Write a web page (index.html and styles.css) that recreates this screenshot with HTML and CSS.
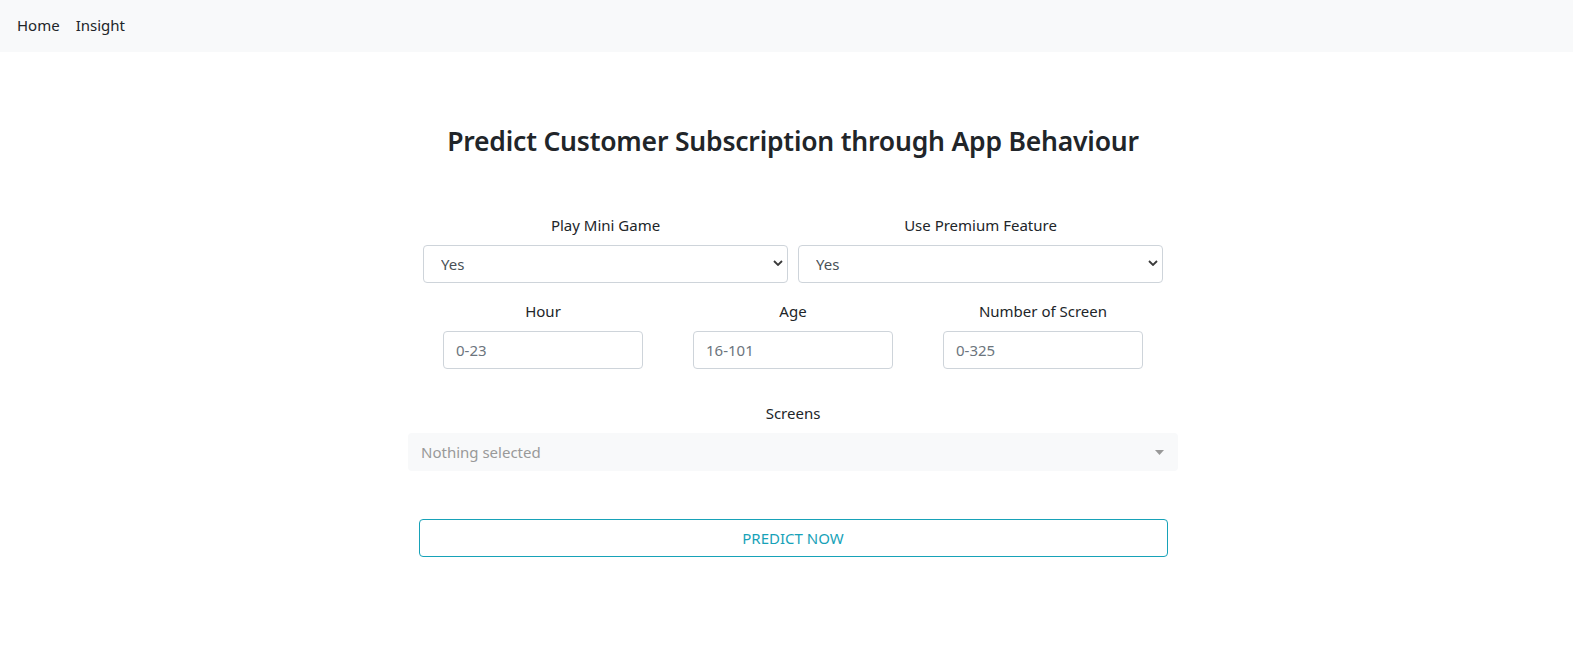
FILE: index.html
```html
<!DOCTYPE html>
<html lang="en">
<head>
<meta charset="utf-8">
<title>Predict Customer Subscription</title>
<link rel="stylesheet" href="styles.css">
</head>
<body>
<nav class="navbar">
  <a class="nav-link" href="#">Home</a>
  <a class="nav-link" href="#">Insight</a>
</nav>
<main class="main">
  <h3 class="title">Predict Customer Subscription through App Behaviour</h3>
  <form class="form">
    <div class="row-two">
      <div class="group">
        <label class="label">Play Mini Game</label>
        <div class="select-wrap">
          <select class="control select"><option>Yes</option><option>No</option></select>
          <svg class="chev" width="10" height="6" viewBox="0 0 10 6"><path d="M1 1 L5 5 L9 1" fill="none" stroke="#3a3a3a" stroke-width="1.8"/></svg>
        </div>
      </div>
      <div class="group">
        <label class="label">Use Premium Feature</label>
        <div class="select-wrap">
          <select class="control select"><option>Yes</option><option>No</option></select>
          <svg class="chev" width="10" height="6" viewBox="0 0 10 6"><path d="M1 1 L5 5 L9 1" fill="none" stroke="#3a3a3a" stroke-width="1.8"/></svg>
        </div>
      </div>
    </div>
    <div class="row-three">
      <div class="group small">
        <label class="label">Hour</label>
        <input class="control input" placeholder="0-23">
      </div>
      <div class="group small">
        <label class="label">Age</label>
        <input class="control input" placeholder="16-101">
      </div>
      <div class="group small">
        <label class="label">Number of Screen</label>
        <input class="control input" placeholder="0-325">
      </div>
    </div>
    <div class="group screens">
      <label class="label">Screens</label>
      <div class="picker">
        <span class="picker-text">Nothing selected</span>
        <svg class="caret" width="9" height="5" viewBox="0 0 9 5"><path d="M0 0 H9 L4.5 5 Z" fill="#999"/></svg>
      </div>
    </div>
    <button type="button" class="btn">PREDICT NOW</button>
  </form>
</main>
</body>
</html>
```
FILE: styles.css
```css
* { box-sizing: border-box; }
html, body { margin: 0; padding: 0; }
body {
  font-family: "Noto Sans", "Open Sans", sans-serif;
  font-size: 16px;
  line-height: 24px;
  color: #212529;
  background: #fff;
}
.navbar {
  height: 52px;
  background: #f8f9fa;
  display: flex;
  align-items: center;
  padding: 0 9px 2px;
}
.nav-link {
  color: #212529;
  text-decoration: none;
  font-size: 15px;
  padding: 0 8px;
}
.main {
  width: 770px;
  margin-left: calc(50% - 378.5px);
  padding-top: 72px;
}
.title {
  margin: 0 0 55px;
  text-align: center;
  font-size: 26.5px;
  line-height: 34px;
  font-weight: 600;
  letter-spacing: -0.2px;
}
.form { display: flex; flex-direction: column; }
.label {
  display: block;
  text-align: center;
  font-size: 15px;
  line-height: 24px;
  margin-bottom: 8px;
}
.row-two {
  display: flex;
  justify-content: center;
  gap: 10px;
  margin-bottom: 16px;
}
.row-two .group { width: 365px; }
.select-wrap { position: relative; }
.control {
  display: block;
  width: 100%;
  height: 38px;
  border: 1px solid #ced4da;
  border-radius: 4px;
  background: #fff;
  font-family: inherit;
  font-size: 15px;
  color: #495057;
  padding: 0 12px;
  outline: none;
}
.select {
  appearance: none;
  -webkit-appearance: none;
  padding-left: 17px;
}
.chev {
  position: absolute;
  right: 5px;
  top: 15px;
  pointer-events: none;
}
.row-three {
  display: flex;
  justify-content: center;
  margin-bottom: 32px;
}
.row-three .group {
  width: 250px;
  display: flex;
  flex-direction: column;
  align-items: center;
}
.input {
  width: 200px;
}
.input::placeholder { color: #6c757d; opacity: 1; }
.screens { margin-bottom: 48px; }
.picker {
  height: 38px;
  background: #f8f9fa;
  border-radius: 4px;
  display: flex;
  align-items: center;
  justify-content: space-between;
  padding: 0 14px 0 13px;
}
.picker-text { color: #999; font-size: 15px; }
.caret { margin-top: 1px; }
.btn {
  align-self: center;
  width: 749px;
  height: 38px;
  border: 1px solid #17a2b8;
  border-radius: 4px;
  background: #fff;
  color: #17a2b8;
  font-family: inherit;
  font-size: 15px;
  cursor: pointer;
}
```
